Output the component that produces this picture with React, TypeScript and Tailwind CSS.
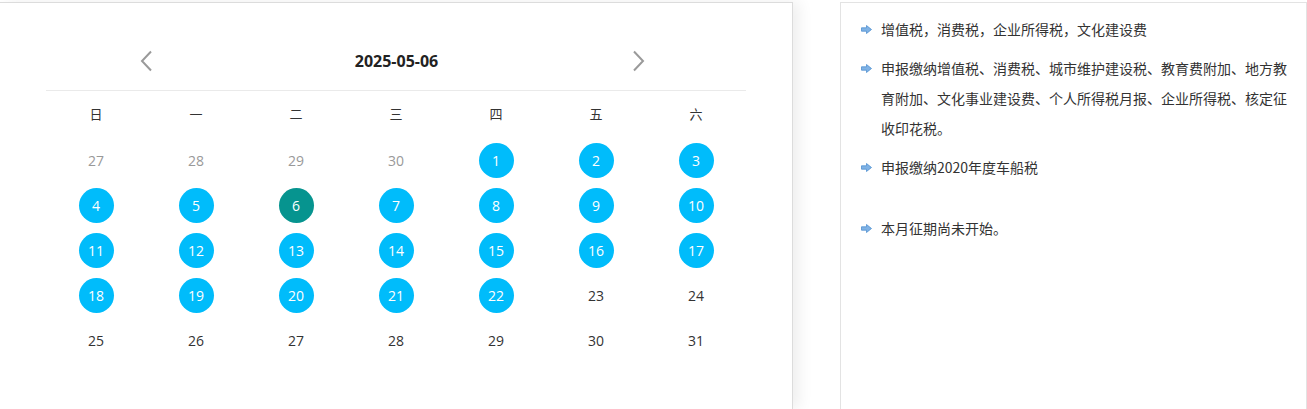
import React from "react";

type Day = { d: number; kind: "prev" | "mark" | "today" | "plain" };

const WEEK = ["日", "一", "二", "三", "四", "五", "六"];

const DAYS: Day[] = [
  ...[27, 28, 29, 30].map((d) => ({ d, kind: "prev" as const })),
  ...Array.from({ length: 31 }, (_, i) => {
    const d = i + 1;
    const kind: Day["kind"] = d === 6 ? "today" : d <= 22 ? "mark" : "plain";
    return { d, kind };
  }),
];

const ITEMS = [
  "增值税，消费税，企业所得税，文化建设费",
  "申报缴纳增值税、消费税、城市维护建设税、教育费附加、地方教育附加、文化事业建设费、个人所得税月报、企业所得税、核定征收印花税。",
  "申报缴纳2020年度车船税",
];

function Chevron({ dir }: { dir: "left" | "right" }) {
  return (
    <svg width="13" height="22" viewBox="0 0 13 22" fill="none">
      <polyline
        points={dir === "left" ? "11,1.5 2,11 11,20.5" : "2,1.5 11,11 2,20.5"}
        stroke="#9a9a9a"
        strokeWidth="2"
        strokeLinejoin="miter"
      />
    </svg>
  );
}

function Bullet() {
  return (
    <svg width="11" height="9" viewBox="0 0 11 9" className="shrink-0">
      <path d="M0.5 2.8 H5.5 V0.5 L10.5 4.5 L5.5 8.5 V6.2 H0.5 Z" fill="#7fb2e5" stroke="#4f8fd0" strokeWidth="0.8" />
    </svg>
  );
}

export default function App() {
  return (
    <div
      className="flex h-[409px] w-[1307px] overflow-hidden bg-white pt-[2px]"
      style={{ fontFamily: '"Open Sans", "Noto Sans CJK SC", sans-serif' }}
    >
      {/* calendar panel */}
      <div className="w-[793px] shrink-0 border-t border-r border-[#dcdcdc] bg-white shadow-[6px_0_14px_rgba(0,0,0,0.07)]">
        <div className="ml-[46px] w-[700px] pt-[29px]">
          <div className="flex h-[59px] items-center justify-between border-b border-[#eaeaea] pl-[94px] pr-[101px]">
            <Chevron dir="left" />
            <span className="ml-[8px] text-[16px] font-bold text-[#222]">2025-05-06</span>
            <Chevron dir="right" />
          </div>
          <div className="grid grid-cols-7">
            {WEEK.map((w) => (
              <div key={w} className="flex h-[47px] items-center justify-center text-[13px] text-[#333]">
                {w}
              </div>
            ))}
            {DAYS.map((x, i) => (
              <div key={i} className="flex h-[45px] items-center justify-center text-[14px]">
                {x.kind === "prev" && <span className="text-[#999]">{x.d}</span>}
                {x.kind === "plain" && <span className="text-[#333]">{x.d}</span>}
                {x.kind === "mark" && (
                  <span className="flex h-[35px] w-[35px] items-center justify-center rounded-full bg-[#00bcfb] text-white">
                    {x.d}
                  </span>
                )}
                {x.kind === "today" && (
                  <span className="flex h-[35px] w-[35px] items-center justify-center rounded-full bg-[#06948f] text-white">
                    {x.d}
                  </span>
                )}
              </div>
            ))}
          </div>
        </div>
      </div>

      {/* notice panel */}
      <div className="ml-[47px] w-[467px] shrink-0 border-t border-l border-r border-[#e3e3e3] pt-[11px] pl-[20px]">
        <ul className="text-[14px] leading-[30px] text-[#333]" style={{ fontFamily: '"Noto Sans CJK SC", sans-serif' }}>
          {ITEMS.map((t) => (
            <li key={t} className="mb-[9px] flex items-start gap-[9px]">
              <span className="flex h-[30px] items-center">
                <Bullet />
              </span>
              <span className="w-[412px]">{t}</span>
            </li>
          ))}
          <li className="mt-[31px] flex items-start gap-[9px]">
            <span className="flex h-[30px] items-center">
              <Bullet />
            </span>
            <span>本月征期尚未开始。</span>
          </li>
        </ul>
      </div>
    </div>
  );
}
